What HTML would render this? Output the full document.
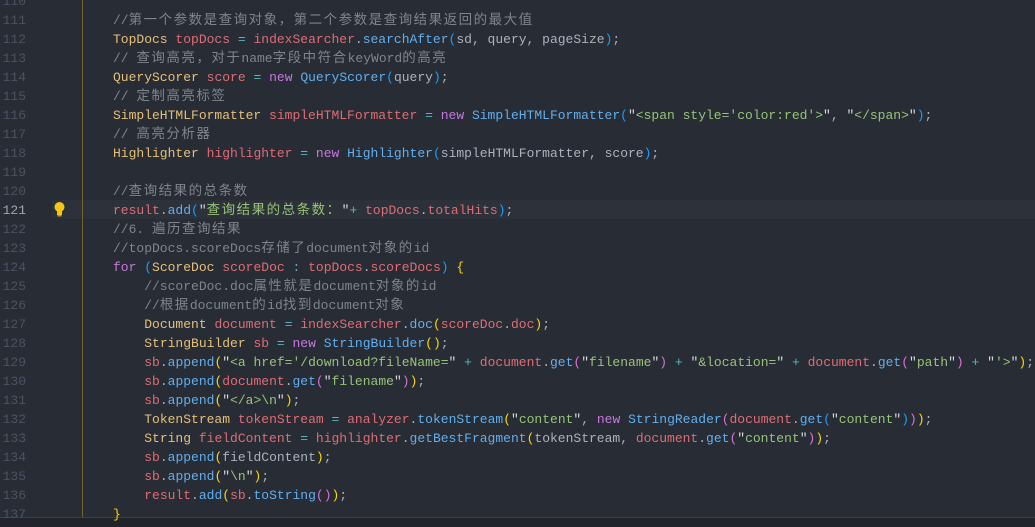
<!DOCTYPE html>
<html><head><meta charset="utf-8"><style>
html,body{margin:0;padding:0}
body{width:1035px;height:527px;background:#282c34;position:relative;overflow:hidden;font-family:"Liberation Mono","Noto Sans CJK SC",monospace;font-size:13px;color:#abb2bf}
.ln{position:absolute;left:0;width:26px;text-align:right;color:#4b5263;height:19px;line-height:19px;margin-top:1px}
.l{position:absolute;left:113px;height:19px;line-height:19px;white-space:pre;margin-top:1px}
.cur{position:absolute;left:52px;right:0;height:19px;background:#2c313a}
i{font-style:normal;font-family:"Noto Sans CJK SC",sans-serif;font-size:13.5px;letter-spacing:1.5px;line-height:1;vertical-align:baseline}
.T{color:#e5c07b}.v{color:#e06c75}.m{color:#61afef}.k{color:#c678dd}.s{color:#98c379}.q{color:#d7dae0}.o{color:#56b6c2}.c{color:#7f848e}
.Y{color:#ffd700}.P{color:#da70d6}.B{color:#179fff}
</style></head><body>
<div class="cur" style="top:200px"></div>
<div style="position:absolute;left:82px;top:0;width:1px;height:517px;background:#6e6432"></div>
<div style="position:absolute;left:0;top:517px;width:1035px;height:1px;background:#3a3f4b"></div>
<div style="position:absolute;left:0;top:518px;width:1035px;height:9px;background:#21252b"></div>
<svg style="position:absolute;left:53px;top:201px" width="13" height="16" viewBox="0 0 13 16"><circle cx="6.5" cy="6" r="5" fill="#f5c518"/><rect x="4" y="10" width="5" height="4" fill="#f5c518"/><rect x="4.5" y="14" width="4" height="1.5" fill="#c9a010"/></svg>
<div class="ln" style="top:-9px">110</div><div class="ln" style="top:10px">111</div><div class="ln" style="top:29px">112</div><div class="ln" style="top:48px">113</div><div class="ln" style="top:67px">114</div><div class="ln" style="top:86px">115</div><div class="ln" style="top:105px">116</div><div class="ln" style="top:124px">117</div><div class="ln" style="top:143px">118</div><div class="ln" style="top:162px">119</div><div class="ln" style="top:181px">120</div><div class="ln" style="top:200px;color:#a0a6b1">121</div><div class="ln" style="top:219px">122</div><div class="ln" style="top:238px">123</div><div class="ln" style="top:257px">124</div><div class="ln" style="top:276px">125</div><div class="ln" style="top:295px">126</div><div class="ln" style="top:314px">127</div><div class="ln" style="top:333px">128</div><div class="ln" style="top:352px">129</div><div class="ln" style="top:371px">130</div><div class="ln" style="top:390px">131</div><div class="ln" style="top:409px">132</div><div class="ln" style="top:428px">133</div><div class="ln" style="top:447px">134</div><div class="ln" style="top:466px">135</div><div class="ln" style="top:485px">136</div><div class="ln" style="top:504px">137</div>

<div class="l c" style="top:10px">//<i>第一个参数是查询对象，第二个参数是查询结果返回的最大值</i></div>
<div class="l" style="top:29px"><span class="T">TopDocs</span> <span class="v">topDocs</span> <span class="o">=</span> <span class="v">indexSearcher</span>.<span class="m">searchAfter</span><span class="B">(</span>sd, query, pageSize<span class="B">)</span>;</div>
<div class="l c" style="top:48px">// <i>查询高亮，对于</i>name<i>字段中符合</i>keyWord<i>的高亮</i></div>
<div class="l" style="top:67px"><span class="T">QueryScorer</span> <span class="v">score</span> <span class="o">=</span> <span class="k">new</span> <span class="m">QueryScorer</span><span class="B">(</span>query<span class="B">)</span>;</div>
<div class="l c" style="top:86px">// <i>定制高亮标签</i></div>
<div class="l" style="top:105px"><span class="T">SimpleHTMLFormatter</span> <span class="v">simpleHTMLFormatter</span> <span class="o">=</span> <span class="k">new</span> <span class="m">SimpleHTMLFormatter</span><span class="B">(</span><span class="q">"</span><span class="s">&lt;span style='color:red'&gt;</span><span class="q">"</span>, <span class="q">"</span><span class="s">&lt;/span&gt;</span><span class="q">"</span><span class="B">)</span>;</div>
<div class="l c" style="top:124px">// <i>高亮分析器</i></div>
<div class="l" style="top:143px"><span class="T">Highlighter</span> <span class="v">highlighter</span> <span class="o">=</span> <span class="k">new</span> <span class="m">Highlighter</span><span class="B">(</span>simpleHTMLFormatter, score<span class="B">)</span>;</div>
<div class="l c" style="top:181px">//<i>查询结果的总条数</i></div>
<div class="l" style="top:200px"><span class="v">result</span>.<span class="m">add</span><span class="B">(</span><span class="q">"</span><span class="s"><i>查询结果的总条数：</i></span><span class="q">"</span><span class="o">+</span> <span class="v">topDocs</span>.<span class="v">totalHits</span><span class="B">)</span>;</div>
<div class="l c" style="top:219px">//6. <i>遍历查询结果</i></div>
<div class="l c" style="top:238px">//topDocs.scoreDocs<i>存储了</i>document<i>对象的</i>id</div>
<div class="l" style="top:257px"><span class="k">for</span> <span class="B">(</span><span class="T">ScoreDoc</span> <span class="v">scoreDoc</span> <span class="o">:</span> <span class="v">topDocs</span>.<span class="v">scoreDocs</span><span class="B">)</span> <span class="Y">{</span></div>
<div class="l c" style="top:276px">    //scoreDoc.doc<i>属性就是</i>document<i>对象的</i>id</div>
<div class="l c" style="top:295px">    //<i>根据</i>document<i>的</i>id<i>找到</i>document<i>对象</i></div>
<div class="l" style="top:314px">    <span class="T">Document</span> <span class="v">document</span> <span class="o">=</span> <span class="v">indexSearcher</span>.<span class="m">doc</span><span class="Y">(</span><span class="v">scoreDoc</span>.<span class="v">doc</span><span class="Y">)</span>;</div>
<div class="l" style="top:333px">    <span class="T">StringBuilder</span> <span class="v">sb</span> <span class="o">=</span> <span class="k">new</span> <span class="m">StringBuilder</span><span class="Y">()</span>;</div>
<div class="l" style="top:352px">    <span class="v">sb</span>.<span class="m">append</span><span class="Y">(</span><span class="q">"</span><span class="s">&lt;a href='/download?fileName=</span><span class="q">"</span> <span class="o">+</span> <span class="v">document</span>.<span class="m">get</span><span class="P">(</span><span class="q">"</span><span class="s">filename</span><span class="q">"</span><span class="P">)</span> <span class="o">+</span> <span class="q">"</span><span class="s">&amp;location=</span><span class="q">"</span> <span class="o">+</span> <span class="v">document</span>.<span class="m">get</span><span class="P">(</span><span class="q">"</span><span class="s">path</span><span class="q">"</span><span class="P">)</span> <span class="o">+</span> <span class="q">"</span><span class="s">'&gt;</span><span class="q">"</span><span class="Y">)</span>;</div>
<div class="l" style="top:371px">    <span class="v">sb</span>.<span class="m">append</span><span class="Y">(</span><span class="v">document</span>.<span class="m">get</span><span class="P">(</span><span class="q">"</span><span class="s">filename</span><span class="q">"</span><span class="P">)</span><span class="Y">)</span>;</div>
<div class="l" style="top:390px">    <span class="v">sb</span>.<span class="m">append</span><span class="Y">(</span><span class="q">"</span><span class="s">&lt;/a&gt;\n</span><span class="q">"</span><span class="Y">)</span>;</div>
<div class="l" style="top:409px">    <span class="T">TokenStream</span> <span class="v">tokenStream</span> <span class="o">=</span> <span class="v">analyzer</span>.<span class="m">tokenStream</span><span class="Y">(</span><span class="q">"</span><span class="s">content</span><span class="q">"</span>, <span class="k">new</span> <span class="m">StringReader</span><span class="P">(</span><span class="v">document</span>.<span class="m">get</span><span class="B">(</span><span class="q">"</span><span class="s">content</span><span class="q">"</span><span class="B">)</span><span class="P">)</span><span class="Y">)</span>;</div>
<div class="l" style="top:428px">    <span class="T">String</span> <span class="v">fieldContent</span> <span class="o">=</span> <span class="v">highlighter</span>.<span class="m">getBestFragment</span><span class="Y">(</span>tokenStream, <span class="v">document</span>.<span class="m">get</span><span class="P">(</span><span class="q">"</span><span class="s">content</span><span class="q">"</span><span class="P">)</span><span class="Y">)</span>;</div>
<div class="l" style="top:447px">    <span class="v">sb</span>.<span class="m">append</span><span class="Y">(</span>fieldContent<span class="Y">)</span>;</div>
<div class="l" style="top:466px">    <span class="v">sb</span>.<span class="m">append</span><span class="Y">(</span><span class="q">"</span><span class="s">\n</span><span class="q">"</span><span class="Y">)</span>;</div>
<div class="l" style="top:485px">    <span class="v">result</span>.<span class="m">add</span><span class="Y">(</span><span class="v">sb</span>.<span class="m">toString</span><span class="P">()</span><span class="Y">)</span>;</div>
<div class="l" style="top:504px"><span class="Y">}</span></div>
</body></html>
